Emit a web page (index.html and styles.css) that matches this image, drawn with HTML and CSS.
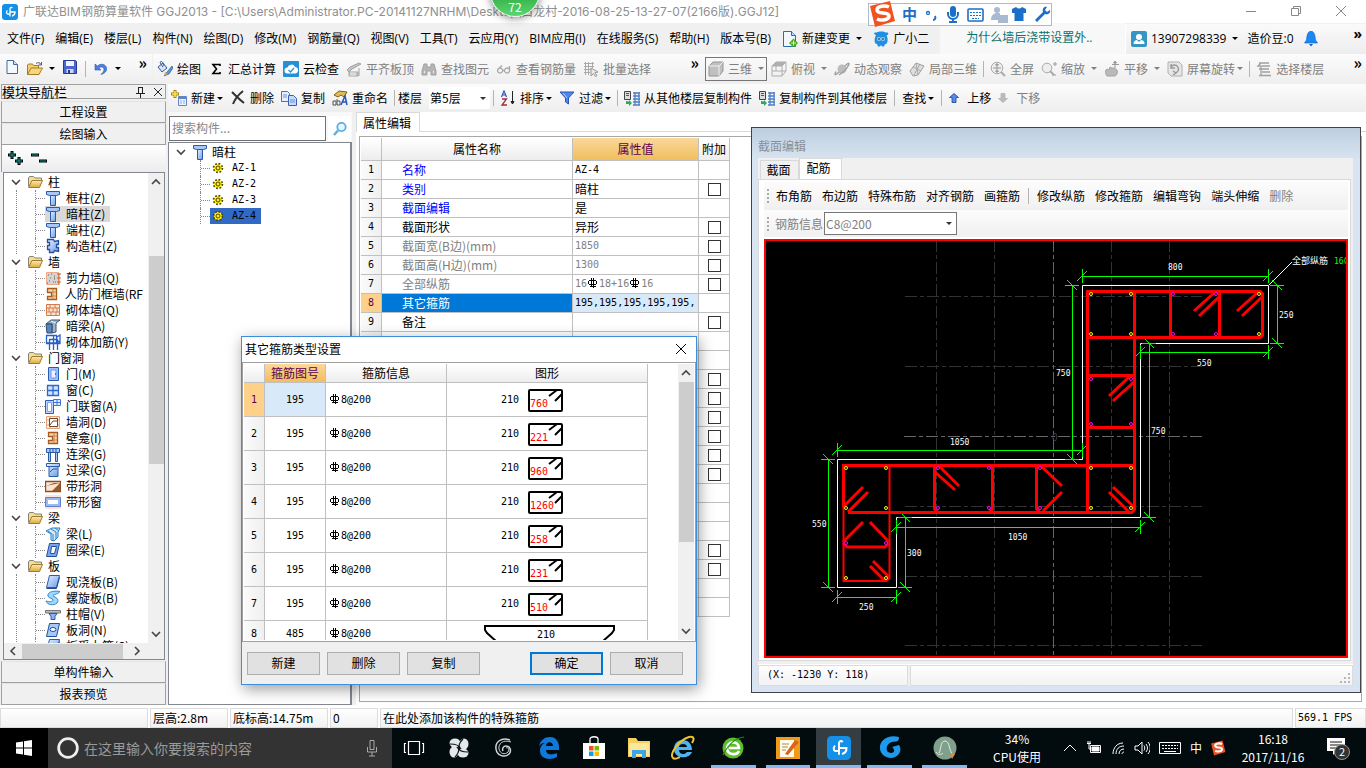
FILE: index.html
```html
<!DOCTYPE html>
<html lang="zh-CN">
<head>
    <meta charset="UTF-8">
    <meta name="viewport" content="width=device-width, initial-scale=1.0">
    <title>广联达BIM钢筋算量软件 GGJ2013</title>
    <link rel="stylesheet" href="styles.css">
</head>
<body>
    <!-- icon sprite -->
    <svg class="sprite" aria-hidden="true">
        <defs>
            <linearGradient id="g-blue" x1="0" y1="0" x2="1" y2="1"><stop offset="0" stop-color="#e8f2ff"/><stop offset="1" stop-color="#6a9be8"/></linearGradient>
            <linearGradient id="g-gold" x1="0" y1="0" x2="0" y2="1"><stop offset="0" stop-color="#fdeeb0"/><stop offset="1" stop-color="#e0a636"/></linearGradient>
        </defs>
        <symbol id="app" viewBox="0 0 16 16"><rect width="16" height="16" rx="3" fill="#1590e8"/><path d="M10.500 4C9 2.500 8 4 8 5v7.500M5.500 6.500A2 2 0 0 0 5.500 10H8M8 8h5a4 4 0 0 1-3 4" fill="none" stroke="#fff" stroke-width="1.300"/></symbol>
        <symbol id="file" viewBox="0 0 16 16"><path d="M3 1.500h6.500l4 4v9H3z" fill="#f4f9ff" stroke="#44689c"/><path d="M9.500 1.500v4h4" fill="#cfe0f5" stroke="#44689c"/></symbol>
        <symbol id="open" viewBox="0 0 16 16"><path d="M.5 13.500V4l1-1h4l1 1.500h5V7" fill="#f3cf6e" stroke="#a87a28"/><path d="M.5 13.500 4 7h11.500l-3.500 6.500z" fill="#f7d77c" stroke="#a87a28"/><path d="M9 2.500c2-1.500 4-1 5 1M14.500 1v3h-3" fill="none" stroke="#557"/></symbol>
        <symbol id="save" viewBox="0 0 16 16"><path d="M1.500 1.500h12l1 1v12h-13z" fill="#4a68cf" stroke="#283a98"/><path d="M4 2h8v5H4z" fill="#eef4ff"/><path d="M4.500 10h7v4h-7z" fill="#cfd8f0"/><path d="M6 11h2v3H6z" fill="#283a98"/></symbol>
        <symbol id="undo" viewBox="0 0 16 16"><path d="M2 3v6h6L6 7c2-2 5-1 5 1.500S9 12 8 13.500c4-1 6-3.500 5.500-6.500C13 3 7.500 2 4.500 5z" fill="#4a7fe0" stroke="#2a58b4" stroke-width=".6"/></symbol>
        <symbol id="paint" viewBox="0 0 16 16"><path d="m1 6 5-4 4 5-5 4z" fill="#d6e4f6" stroke="#345a94"/><path d="M6 6C4 3 2 1 4 .5S6 3 7 5" fill="none" stroke="#345a94"/><path d="m15 5-5 6-3 4 5-2 4-6z" fill="#5a94dc" stroke="#345a94" stroke-width=".7"/><path d="m7 15 1-4 3 2z" fill="#d8a83a"/></symbol>
        <symbol id="sigma" viewBox="0 0 16 16"><path d="M12 5V3.500H5L8.500 8 5 12.500h7V11" fill="none" stroke="#000" stroke-width="1.600"/></symbol>
        <symbol id="cloud" viewBox="0 0 16 16"><rect width="16" height="16" rx="1" fill="#2591d2"/><path d="M4.500 12.500a3 3 0 0 1 0-6 4 4 0 0 1 7.500-.5 3.300 3.300 0 0 1 .5 6.500z" fill="#fff"/><path d="m5.500 9 2 2 3.500-4" fill="none" stroke="#2591d2" stroke-width="1.300"/></symbol>
        <symbol id="align" viewBox="0 0 16 16"><path d="m1 9 3-3 9-4 2 1-9 5-3 3zM3 11h9v4H3zM13 7v8" fill="#c4c4c4" stroke="#a2a2a2"/><path d="M5 11v4m2-4v4m2-4v4" stroke="#eee"/></symbol>
        <symbol id="binoc" viewBox="0 0 16 16"><path d="M3 3h3v3h4V3h3l2 7v4h-5v-4H6v4H1v-4z" fill="#b5b5b5" stroke="#a2a2a2"/><path d="M3 11h1m8 0h1" stroke="#eee" stroke-width="2"/></symbol>
        <symbol id="glasses" viewBox="0 0 16 16"><path d="M4 12a2.500 2.500 0 1 1 .1 0M11 12a2.500 2.500 0 1 1 .1 0M6.500 9.500h2M1.500 9 6 4.500M13.500 10V5" fill="none" stroke="#a8a8a8" stroke-width="1.300"/></symbol>
        <symbol id="batch" viewBox="0 0 16 16"><path d="M1 2.500h10M1 5.500h10M1 8.500h7M1 11.500h6M2.500 1v13M5.500 1v13M9.500 1v6" stroke="#aaa" fill="none"/><path d="m8 7 7 4-3 .7 2 3-1.500 1-2-3L8 15z" fill="#e8e8e8" stroke="#999"/></symbol>
        <symbol id="cube" viewBox="0 0 16 16"><path d="m1 5 4-4h10v9l-4 5H1z" fill="#c0c0c0" stroke="#949494"/><path d="M1 5h10v10M11 5l4-4" fill="none" stroke="#f0f0f0"/></symbol>
        <symbol id="topview" viewBox="0 0 16 16"><path d="m1 5 4-4h10l-4 4z" fill="#b0b0b0"/><path d="m1 5 4-4h10v9l-4 5H1zM1 5h10v10M11 5l4-4M5 1v9H1m4 0h10" fill="none" stroke="#adadad"/></symbol>
        <symbol id="orbit" viewBox="0 0 16 16"><circle cx="8" cy="8" r="4.500" fill="#bdbdbd"/><path d="M5 11C1 15 0 14 2 10.500M11 5c4-4 5-3 3 0-2 4-6 7-9 9" fill="none" stroke="#a0a0a0" stroke-width="1.500"/></symbol>
        <symbol id="local3d" viewBox="0 0 16 16"><path d="m1 10 6-8 8 3-6 9-5 1z" fill="#dedede" stroke="#a0a0a0"/><path d="m4 6 8 4M7 2l2 12M11 3 5 14" stroke="#aaa" fill="none"/></symbol>
        <symbol id="full" viewBox="0 0 16 16"><circle cx="7" cy="7" r="5.800" fill="#eee" stroke="#aaa"/><path d="M7 3v8M3 7h8M7 2.500 5.500 4h3zM7 11.500 5.500 10h3z" stroke="#999" fill="#999"/><path d="m11 11 4 4" stroke="#aaa" stroke-width="2"/></symbol>
        <symbol id="zoom" viewBox="0 0 16 16"><circle cx="6" cy="7" r="4.800" fill="#eee" stroke="#aaa"/><path d="M12 3h4m-2-2v4m-3 9h4" stroke="#999"/><path d="m9 10 4 4" stroke="#aaa" stroke-width="2"/></symbol>
        <symbol id="pan" viewBox="0 0 16 16"><path d="M3 15C1 12 1 9 3 8l2 1 1-3 2 1 2 0 3 2c1 3 0 5-2 6z" fill="#b9b9b9" stroke="#a4a4a4"/><path d="M11 0v7M8 3.500h7M11 0 9.500 2h3z" stroke="#999" fill="#999"/></symbol>
        <symbol id="rotate" viewBox="0 0 16 16"><path d="M1 1h11l3 3v11H4l-3-3z" fill="#e6e6e6" stroke="#b0b0b0"/><path d="M4 6a4 4 0 1 1 4 6M4 3v4h4M6 14l3-2-3-2" fill="none" stroke="#999" stroke-width="1.400"/></symbol>
        <symbol id="floors" viewBox="0 0 16 16"><path d="M3 2h10M6 5h8M3 8h10M6 11h8M3 14.500h12M5 2 2 5h3v10" fill="none" stroke="#a0a0a0" stroke-width="1.300"/></symbol>
        <symbol id="add" viewBox="0 0 16 16"><path d="M4 0v8M0 4h8" stroke="#a8830a" stroke-width="3"/><path d="M4 1v6M1 4h6" stroke="#ffe34a" stroke-width="1.600"/><path d="M7.500 6.500h8v9h-8z" fill="#eef4ff" stroke="#6386bd"/><path d="M8 7h7v2H8z" fill="#5b86cf"/><path d="M9 11h2m1 0h2m-5 2h2m1 0h2" stroke="#88a8dc"/></symbol>
        <symbol id="cross" viewBox="0 0 16 16"><path d="M2 2c4 4 8 8 12 11M13 1C8 5 5 9 3 14" fill="none" stroke="#333" stroke-width="2"/></symbol>
        <symbol id="copy" viewBox="0 0 16 16"><path d="M.5 1.500h6l2 2v8h-8z" fill="#e6efff" stroke="#4a70b8"/><path d="M7.500 5.500h5l3 3v7h-8z" fill="#c7dafa" stroke="#3961b0"/><path d="M2 5h4M2 7h4M9 10h5m-5 2h5" stroke="#6a92d8"/></symbol>
        <symbol id="rename" viewBox="0 0 16 16"><path d="m2 5 5-4 8 1-3 5-3-2-3 2z" fill="#e1bd5a" stroke="#80601a"/><path d="M1 11h3v4H1zM5 9v6h3v-4H5" fill="none" stroke="#555"/><path d="m9 15 4-9 2 9M10 12h5" fill="none" stroke="#2558b8" stroke-width="1.500"/></symbol>
        <symbol id="sort" viewBox="0 0 16 16"><path d="m1.500 7 2.500-6 2.500 6M2.500 5h3" fill="none" stroke="#3158b0" stroke-width="1.200"/><path d="M2 9h4.500L2 15h5" fill="none" stroke="#a22b3b" stroke-width="1.300"/><path d="M12.500 1v12M11 11.500l1.500 2.500 1.500-2.500z" stroke="#222" fill="#222"/></symbol>
        <symbol id="funnel" viewBox="0 0 16 16"><path d="M1 2h14l-5.500 6v6l-3-2V8z" fill="#4f86ee" stroke="#2a55b2"/><path d="m4 3 4 5" stroke="#b9d2ff"/></symbol>
        <symbol id="floorcopy" viewBox="0 0 16 16"><path d="M.5 1.500h6v8h-6z" fill="#ddd" stroke="#444"/><path d="M2 3.500h3m-3 2h3" stroke="#555"/><path d="M11 2v13M15 2v13M9 3h7M9 6h7M9 9h7M9 12h7M9 15h7" stroke="#4e7fc4" stroke-width="1.300"/><path d="M2 11v3h3v2l3-3-3-3v1.500z" fill="#2fa85a"/></symbol>
        <symbol id="up" viewBox="0 0 10 10"><path d="m5 .5 4.500 4H7v5H3v-5H.5z" fill="#5a8ae8" stroke="#1d3fa0" stroke-width=".8"/></symbol>
        <symbol id="down" viewBox="0 0 10 10"><path d="m5 9.500 4.500-4H7v-5H3v5H.5z" fill="#bbb" stroke="#b2b2b2" stroke-width=".8"/></symbol>
        <symbol id="change" viewBox="0 0 16 16"><path d="M1.500.5h8l4 4v11h-12z" fill="#f0f7ff" stroke="#2d6aa8"/><path d="M9.500.5v4h4" fill="#bcd8f4" stroke="#2d6aa8"/><path d="M11.500 7.500 16 12l-4.500 4.500L7 12z" fill="#48a91f"/><path d="M9 12h5m-2.500-2.500v5" stroke="#d9ff9c"/></symbol>
        <symbol id="mascot" viewBox="0 0 16 16"><path d="M3 4c-3-1-2-3 0-2.500C6 0 11 0 13 1.500c3-.5 3 2 .5 3C16 9 14 14 12 13l-1 2.500H9L8 14l-1 1.500H5L4 13C1 13 1 8 3 4z" fill="#1f8fe4"/><path d="M4.500 6.500h3v3h-3zM8.500 6.500h3v3h-3z" fill="#eaf6ff"/><path d="M6 7v2m4-2v2" stroke="#134" stroke-width="1.300"/></symbol>
        <symbol id="user" viewBox="0 0 16 16"><rect width="16" height="16" rx="2" fill="#3596c6"/><circle cx="8" cy="6" r="3" fill="#fff"/><path d="M2.500 13c0-3 2-4 3.500-4l2 2 2-2c2 0 3.500 1 3.500 4z" fill="#fff"/></symbol>
        <symbol id="bell" viewBox="0 0 16 16"><path d="M8 0C4 1 4 5 3.500 9L1.500 12h13l-2-3C12 5 12 1 8 0z" fill="#1c86f2" stroke="#0c62c4" stroke-width=".6"/><path d="M6 13h4l-2 2.500z" fill="#0c62c4"/></symbol>
        <symbol id="search" viewBox="0 0 16 16"><circle cx="9.500" cy="6" r="4.200" fill="#eaf6ff" stroke="#5aaee6" stroke-width="1.800"/><path d="m6 9.500-4 4.500" stroke="#5aaee6" stroke-width="2.500"/></symbol>
        <symbol id="rebar" viewBox="0 0 10 10"><path d="M1 2.500h7M.5 3v3M8.500 3v3M1 6.500h7M3.500 0v9M5.500 0v10M2 8.500h6" fill="none" stroke="currentColor"/></symbol>
        <!-- component tree -->
        <symbol id="folder" viewBox="0 0 16 16"><path d="M1.500 12V4l1-1.500h4L8 4h6.500v3" fill="#f7dd94" stroke="#8a8570"/><path d="M1.500 13.500 5 6.500h10.500l-3 7z" fill="url(#g-gold)" stroke="#9a7a36"/></symbol>
        <symbol id="column" viewBox="0 0 16 16"><path d="M1.500 1.500h13v3l-3 1h-7l-3-1z" fill="#a9c8f6" stroke="#2858a8"/><path d="M5.500 5.500h5v10h-5z" fill="url(#g-blue)" stroke="#2858a8"/></symbol>
        <symbol id="tiecol" viewBox="0 0 16 16"><path d="M4.500 1.500h4l1 2 4-1v4h-2v3h2v4l-4-1-1 2h-4v-3h-2v-4h2v-3h-2v-3z" fill="url(#g-blue)" stroke="#234f9c" stroke-width="1.300"/></symbol>
        <symbol id="shear" viewBox="0 0 16 16"><path d="M1.500 2.500h12v12h-12z" fill="#d4d4d4" stroke="#f0a888"/><path d="M3 5h1m2-1h1m2 2h1m-5 2h1m3 1h1m-6 2h1m3 1h1m-7 1h1m6-5h1m0 4h1" stroke="#666"/><path d="M14 3v12M12 4h4m-4 4h4m-4 4h4" stroke="#c66a2c"/></symbol>
        <symbol id="niche" viewBox="0 0 16 16"><path d="M3.500 2.500h9v11h-9v-3h4v-4h-4z" fill="#f6d3a8" stroke="#a85a1c" stroke-width="1.300"/><path d="M8 6h4M8 10h4M9 3v10" stroke="#c98550"/></symbol>
        <symbol id="brick" viewBox="0 0 16 16"><path d="M1.500 2.500h13v11h-13z" fill="#fde5d4" stroke="#d27a4c"/><path d="M1 6h14M1 10h14M5 2v4m5-4v4M8 6v4m4-4v4M4 6v4m2 0v4m5-4v4" stroke="#d27a4c"/></symbol>
        <symbol id="hidbeam" viewBox="0 0 16 16"><path d="m1 6 5-4h9l-4 3v9l-4 1V6z" fill="#9fb4cc" stroke="#3c5470"/><path d="M1 6h6v9H2z" fill="#5c86b8" stroke="#2d4a70"/><path d="m6 3 5 2" stroke="#e4eefa"/></symbol>
        <symbol id="ties" viewBox="0 0 16 16"><path d="M1.500 9V1.500h10V9zM4.500 16V5.500h8V16M1 9.500h14M8.500 2v14M12 3l3-2v8l-3-3" fill="none" stroke="#2460cc" stroke-width="1.300"/></symbol>
        <symbol id="door" viewBox="0 0 16 16"><path d="M3.500 1.500h10v13h-10z" fill="#9dc0fa" stroke="#2a5bb4"/><path d="M6 4h5v8H6z" fill="#eaf3ff" stroke="#6b9af0"/><path d="M10 8h1" stroke="#113"/></symbol>
        <symbol id="window" viewBox="0 0 16 16"><path d="M2.500 3.500h11v10h-11zM8 3v11M3 8.500h10" fill="#d0e6ff" stroke="#2f66cc" stroke-width="1.300"/></symbol>
        <symbol id="doorwin" viewBox="0 0 16 16"><path d="M.5 2.500h8v13h-8z" fill="#bcd5ff" stroke="#2f5cc0"/><path d="M2.500 4.500h4v9h-4z" fill="#fff" stroke="#7ba2ec"/><path d="M8.500 1.500h7v6h-7zM12 1v7M8 4.500h8" fill="#e2eeff" stroke="#3f72dc"/></symbol>
        <symbol id="hole" viewBox="0 0 16 16"><path d="M1.500 2.500h13v12h-13zM1 6h14M1 11h14M5 2v12m7-12v12" fill="#fff0e2" stroke="#dfa37c"/><path d="M4.500 4.500h8v8h-8z" fill="#fff" stroke="#70462a"/><path d="m5 11 3-4h4" stroke="#70462a" fill="none"/></symbol>
        <symbol id="linkbeam" viewBox="0 0 16 16"><path d="M1.500 2.500h13v4h-13zM3.500 6.500h2v9h-2zM10.500 6.500h2v9h-2z" fill="#aac8f8" stroke="#285ba8"/><path d="M5 3v3m3-3v3m3-3v3" stroke="#285ba8"/></symbol>
        <symbol id="lintel" viewBox="0 0 16 16"><path d="M1.500 1.500h13v3h-13zM4 4.500h9v10H4z" fill="url(#g-blue)" stroke="#285ba8"/><path d="m5 10 3-3h4" stroke="#285ba8" fill="none"/></symbol>
        <symbol id="striphole" viewBox="0 0 16 16"><path d="M.5 3.500h15v10H.5z" fill="#fce6d2" stroke="#8f4d1c" stroke-width="1.400"/><path d="m1 8 8-3h6v8H7l8-8z" fill="#9a5a28"/></symbol>
        <symbol id="stripwin" viewBox="0 0 16 16"><path d="M0 1h16v14H0z" fill="#fde3da"/><path d="M.5 3.500h15v9H.5z" fill="#9bbaf4" stroke="#5e7fce"/><path d="M3 6h10v4H3z" fill="#fff"/></symbol>
        <symbol id="beam" viewBox="0 0 16 16"><path d="m1 5 6-3h8l-2 4v5l-4 4-3-1V8z" fill="#cfe8fb" stroke="#2b80c4"/><path d="m3 5 4 3m-1-5 5 3m-1-4 4 3M8 8v7m3-9v7" stroke="#2b80c4"/></symbol>
        <symbol id="ringbeam" viewBox="0 0 16 16"><path d="M4.500 1.500h10l-3 13h-10z" fill="#7ba7ea" stroke="#204f9e"/><path d="M6.500 4.500h5l-2 7h-4z" fill="#fff" stroke="#204f9e"/></symbol>
        <symbol id="slab" viewBox="0 0 16 16"><path d="M4.500 1.500h10l-3 12h-10z" fill="url(#g-blue)" stroke="#2a5bb0"/><path d="M1.500 14.500h10l3-11" fill="none" stroke="#234a90"/></symbol>
        <symbol id="spiral" viewBox="0 0 16 16"><path d="M15 1.500C7 0 2 3 3 6s5 2 5 4-4 2-7 1c1 4 8 5 11 2 3-4-2-6-4-7 0-2 4-1 7-4.500z" fill="#9fd8fa" stroke="#2f86cc"/></symbol>
        <symbol id="cap" viewBox="0 0 16 16"><path d="M.5 4.500h15v2.500H.5z" fill="#bbb" stroke="#777"/><path d="M4 7.500h8l-2 3v3H6v-3z" fill="#8ab2f4" stroke="#2a5bb0"/></symbol>
        <symbol id="slabhole" viewBox="0 0 16 16"><path d="M4.500 1.500h10l-3 13h-10z" fill="#a6c8f8" stroke="#204f9e"/><ellipse cx="8" cy="7.500" rx="3" ry="2" fill="#fff" stroke="#204f9e"/></symbol>
        <symbol id="gear" viewBox="0 0 12 12"><circle cx="6" cy="6" r="4" fill="#ffef1a" stroke="#4a4400" stroke-width="2.500" stroke-dasharray="1.600 1.540"/><circle cx="6" cy="6" r="3.600" fill="#ffef1a"/><circle cx="6" cy="6" r="2" fill="none" stroke="#4a4400"/></symbol>
        <symbol id="chev" viewBox="0 0 10 10"><path d="m1 3 4 4 4-4" fill="none" stroke="#444" stroke-width="1.600"/></symbol>
        <symbol id="sogou" viewBox="0 0 28 28"><path d="m2 6 20-5 5 20-20 6z" fill="#f0531f"/><path d="M21 7c-4-2-12-1-12 3 0 5 12 1 12 6 0 4-8 5-12 3" fill="none" stroke="#fff" stroke-width="3.600"/></symbol>
        <!-- stirrup rectangle with its two hooks -->
        <symbol id="hooks" viewBox="0 0 36 24"><rect x="1" y="2" width="33" height="21" rx="1" fill="none" stroke="#000" stroke-width="2"/><path d="m21 8 8-6M27 13l7-7" stroke="#000" stroke-width="2"/></symbol>
        <!-- dimension ends -->
        <symbol id="dim-h" viewBox="-8 -8 16 16"><path d="M.5-7v14M-5 5 5-5" stroke="#0f0" fill="none"/></symbol>
        <symbol id="dim-v" viewBox="-8 -8 16 16"><path d="M-7 .5H7M-5-5 5 5" stroke="#0f0" fill="none"/></symbol>
        <symbol id="size-grip" viewBox="0 0 12 12"><path d="M8 1h2v2H8zM4 5h2v2H4zM8 5h2v2H8zM0 9h2v2H0zM4 9h2v2H4zM8 9h2v2H8z" fill="#b8b8b8"/></symbol>
    </svg>

    <header class="titlebar">
        <svg class="icon"><use href="#app"/></svg>
        <span class="title">广联达BIM钢筋算量软件 GGJ2013 - [C:\Users\Administrator.PC-20141127NRHM\Desktop\白龙村-2016-08-25-13-27-07(2166版).GGJ12]</span>
        <div class="win-buttons">
            <button aria-label="最小化"><svg viewBox="0 0 12 12"><path d="M1 6.500h10"/></svg></button>
            <button aria-label="还原"><svg viewBox="0 0 12 12"><path d="M1.500 3.500h7v7h-7zM3.500 3V1.500h7v7H9"/></svg></button>
            <button aria-label="关闭"><svg viewBox="0 0 12 12"><path d="m1 1 10 10M11 1 1 11"/></svg></button>
        </div>
    </header>

    <nav class="menubar">
        <button>文件(F)</button><button>编辑(E)</button><button>楼层(L)</button><button>构件(N)</button><button>绘图(D)</button><button>修改(M)</button><button>钢筋量(Q)</button><button>视图(V)</button><button>工具(T)</button><button>云应用(Y)</button><button>BIM应用(I)</button><button>在线服务(S)</button><button>帮助(H)</button><button>版本号(B)</button>
        <button class="tool"><svg class="icon"><use href="#change"/></svg>新建变更<i class="caret"></i></button>
        <button class="tool"><svg class="icon"><use href="#mascot"/></svg>广小二</button>
        <a class="tip" href="#">为什么墙后浇带设置外..</a>
        <div class="account">
            <button class="tool"><svg class="icon"><use href="#user"/></svg>13907298339<i class="caret"></i></button>
            <span>造价豆:0</span>
            <svg class="icon"><use href="#bell"/></svg>
            <b class="more">»</b>
        </div>
    </nav>

    <div class="toolbars">
        <div class="toolbar files">
            <button aria-label="新建"><svg class="icon"><use href="#file"/></svg></button>
            <button class="tool" aria-label="打开"><svg class="icon"><use href="#open"/></svg><i class="caret"></i></button>
            <button aria-label="保存"><svg class="icon"><use href="#save"/></svg></button>
            <i class="sep"></i>
            <button class="tool" aria-label="撤销"><svg class="icon"><use href="#undo"/></svg><i class="caret"></i></button>
            <b class="more">»</b>
        </div>
        <div class="toolbar actions">
            <button class="tool"><svg class="icon"><use href="#paint"/></svg>绘图</button>
            <button class="tool"><svg class="icon"><use href="#sigma"/></svg>汇总计算</button>
            <button class="tool"><svg class="icon"><use href="#cloud"/></svg>云检查</button>
            <button class="tool off"><svg class="icon"><use href="#align"/></svg>平齐板顶</button>
            <button class="tool off"><svg class="icon"><use href="#binoc"/></svg>查找图元</button>
            <button class="tool off"><svg class="icon"><use href="#glasses"/></svg>查看钢筋量</button>
            <button class="tool off"><svg class="icon"><use href="#batch"/></svg>批量选择</button>
            <b class="more">»</b>
        </div>
        <div class="toolbar views">
            <button class="tool off boxed"><svg class="icon"><use href="#cube"/></svg>三维<i class="caret"></i></button>
            <button class="tool off"><svg class="icon"><use href="#topview"/></svg>俯视<i class="caret"></i></button>
            <button class="tool off"><svg class="icon"><use href="#orbit"/></svg>动态观察</button>
            <button class="tool off"><svg class="icon"><use href="#local3d"/></svg>局部三维</button>
            <i class="sep"></i>
            <button class="tool off"><svg class="icon"><use href="#full"/></svg>全屏</button>
            <button class="tool off"><svg class="icon"><use href="#zoom"/></svg>缩放<i class="caret"></i></button>
            <button class="tool off"><svg class="icon"><use href="#pan"/></svg>平移<i class="caret"></i></button>
            <button class="tool off tight"><svg class="icon"><use href="#rotate"/></svg>屏幕旋转<i class="caret"></i></button>
            <i class="sep"></i>
            <button class="tool off"><svg class="icon"><use href="#floors"/></svg>选择楼层</button>
            <b class="more">»</b>
        </div>
    </div>

    <main class="workspace">
        <aside class="nav-panel">
            <div class="nav-title">模块导航栏
                <svg viewBox="0 0 30 12"><path d="M5 1.500h5M5.500 1v6M9.500 1v6M3 7.500h9M7.500 8v4M21 2l8 8M29 2l-8 8"/></svg>
            </div>
            <button class="nav-button">工程设置</button>
            <button class="nav-button">绘图输入</button>
            <div class="nav-tools">
                <svg viewBox="0 0 40 18"><path d="M5 1v8M1 5h8M12 7v8M8 11h8M24 5h8M32 11h8" stroke="#000" stroke-width="3"/><path d="M5 2v6M2 5h6M12 8v6M9 11h6M25 5h6M33 11h6" stroke="#00a0a0" stroke-width="1"/></svg>
            </div>
            <div class="tree-box">
                <div class="tree-main">
                    <ul class="tree">
                        <li><div class="branch"><svg class="chev"><use href="#chev"/></svg><svg class="icon"><use href="#folder"/></svg>柱</div>
                            <ul>
                                <li><span class="leaf"><svg class="icon"><use href="#column"/></svg>框柱(Z)</span></li>
                                <li><span class="leaf current"><svg class="icon"><use href="#column"/></svg>暗柱(Z)</span></li>
                                <li><span class="leaf"><svg class="icon"><use href="#column"/></svg>端柱(Z)</span></li>
                                <li><span class="leaf"><svg class="icon"><use href="#tiecol"/></svg>构造柱(Z)</span></li>
                            </ul>
                        </li>
                        <li><div class="branch"><svg class="chev"><use href="#chev"/></svg><svg class="icon"><use href="#folder"/></svg>墙</div>
                            <ul>
                                <li><span class="leaf"><svg class="icon"><use href="#shear"/></svg>剪力墙(Q)</span></li>
                                <li><span class="leaf"><svg class="icon"><use href="#niche"/></svg>人防门框墙(RF</span></li>
                                <li><span class="leaf"><svg class="icon"><use href="#brick"/></svg>砌体墙(Q)</span></li>
                                <li><span class="leaf"><svg class="icon"><use href="#hidbeam"/></svg>暗梁(A)</span></li>
                                <li><span class="leaf"><svg class="icon"><use href="#ties"/></svg>砌体加筋(Y)</span></li>
                            </ul>
                        </li>
                        <li><div class="branch"><svg class="chev"><use href="#chev"/></svg><svg class="icon"><use href="#folder"/></svg>门窗洞</div>
                            <ul>
                                <li><span class="leaf"><svg class="icon"><use href="#door"/></svg>门(M)</span></li>
                                <li><span class="leaf"><svg class="icon"><use href="#window"/></svg>窗(C)</span></li>
                                <li><span class="leaf"><svg class="icon"><use href="#doorwin"/></svg>门联窗(A)</span></li>
                                <li><span class="leaf"><svg class="icon"><use href="#hole"/></svg>墙洞(D)</span></li>
                                <li><span class="leaf"><svg class="icon"><use href="#niche"/></svg>壁龛(I)</span></li>
                                <li><span class="leaf"><svg class="icon"><use href="#linkbeam"/></svg>连梁(G)</span></li>
                                <li><span class="leaf"><svg class="icon"><use href="#lintel"/></svg>过梁(G)</span></li>
                                <li><span class="leaf"><svg class="icon"><use href="#striphole"/></svg>带形洞</span></li>
                                <li><span class="leaf"><svg class="icon"><use href="#stripwin"/></svg>带形窗</span></li>
                            </ul>
                        </li>
                        <li><div class="branch"><svg class="chev"><use href="#chev"/></svg><svg class="icon"><use href="#folder"/></svg>梁</div>
                            <ul>
                                <li><span class="leaf"><svg class="icon"><use href="#beam"/></svg>梁(L)</span></li>
                                <li><span class="leaf"><svg class="icon"><use href="#ringbeam"/></svg>圈梁(E)</span></li>
                            </ul>
                        </li>
                        <li><div class="branch"><svg class="chev"><use href="#chev"/></svg><svg class="icon"><use href="#folder"/></svg>板</div>
                            <ul>
                                <li><span class="leaf"><svg class="icon"><use href="#slab"/></svg>现浇板(B)</span></li>
                                <li><span class="leaf"><svg class="icon"><use href="#spiral"/></svg>螺旋板(B)</span></li>
                                <li><span class="leaf"><svg class="icon"><use href="#cap"/></svg>柱帽(V)</span></li>
                                <li><span class="leaf"><svg class="icon"><use href="#slabhole"/></svg>板洞(N)</span></li>
                                <li><span class="leaf"><svg class="icon"><use href="#slab"/></svg>板受力筋(S)</span></li>
                            </ul>
                        </li>
                    </ul>
                    <div class="vscroll nav-scroll"><svg class="chev"><use href="#chev"/></svg><i></i><svg class="chev"><use href="#chev"/></svg></div>
                </div>
                <div class="hscroll"><svg class="chev"><use href="#chev"/></svg><i></i><svg class="chev"><use href="#chev"/></svg></div>
            </div>
            <button class="nav-button">单构件输入</button>
            <button class="nav-button">报表预览</button>
        </aside>

        <section class="content">
            <div class="toolbar edit-bar">
                <button class="tool tight"><svg class="icon"><use href="#add"/></svg>新建<i class="caret"></i></button>
                <button class="tool"><svg class="icon"><use href="#cross"/></svg>删除</button>
                <button class="tool"><svg class="icon"><use href="#copy"/></svg>复制</button>
                <button class="tool"><svg class="icon"><use href="#rename"/></svg>重命名</button>
                <i class="sep"></i>
                <label class="floor">楼层
                    <select><option>第5层</option></select>
                </label>
                <i class="sep"></i>
                <button class="tool tight"><svg class="icon"><use href="#sort"/></svg>排序<i class="caret"></i></button>
                <button class="tool tight"><svg class="icon"><use href="#funnel"/></svg>过滤<i class="caret"></i></button>
                <i class="sep"></i>
                <button class="tool"><svg class="icon"><use href="#floorcopy"/></svg>从其他楼层复制构件</button>
                <button class="tool"><svg class="icon"><use href="#floorcopy"/></svg>复制构件到其他楼层</button>
                <i class="sep"></i>
                <button class="tool tight">查找<i class="caret"></i></button>
                <i class="sep"></i>
                <button class="tool move"><svg class="arrow"><use href="#up"/></svg>上移</button>
                <button class="tool move off"><svg class="arrow"><use href="#down"/></svg>下移</button>
            </div>

            <div class="panes">
                <div class="component-pane">
                    <div class="search">
                        <input type="text" placeholder="搜索构件..." aria-label="搜索构件">
                        <button aria-label="搜索"><svg class="icon"><use href="#search"/></svg></button>
                    </div>
                    <div class="component-list">
                        <div class="branch"><svg class="chev"><use href="#chev"/></svg><svg class="icon"><use href="#column"/></svg>暗柱</div>
                        <ul>
                            <li><span class="leaf"><svg class="gear"><use href="#gear"/></svg>AZ-1</span></li>
                            <li><span class="leaf"><svg class="gear"><use href="#gear"/></svg>AZ-2</span></li>
                            <li><span class="leaf"><svg class="gear"><use href="#gear"/></svg>AZ-3</span></li>
                            <li><span class="leaf picked"><svg class="gear"><use href="#gear"/></svg>AZ-4</span></li>
                        </ul>
                    </div>
                </div>

                <div class="property-pane">
                    <div class="tab-strip"><button class="tab">属性编辑</button></div>
                    <div class="property-box">
                        <table class="grid property">
                            <colgroup><col class="w-num"><col class="w-name"><col class="w-value"><col class="w-extra"></colgroup>
                            <thead><tr><th></th><th>属性名称</th><th class="hot">属性值</th><th>附加</th></tr></thead>
                            <tbody>
                                <tr><th>1</th><td class="link">名称</td><td class="code">AZ-4</td><td></td></tr>
                                <tr><th>2</th><td class="link">类别</td><td>暗柱</td><td><input type="checkbox" aria-label="附加"></td></tr>
                                <tr><th>3</th><td class="link">截面编辑</td><td>是</td><td></td></tr>
                                <tr><th>4</th><td>截面形状</td><td>异形</td><td><input type="checkbox" aria-label="附加"></td></tr>
                                <tr class="dim"><th>5</th><td>截面宽(B边)(mm)</td><td class="code">1850</td><td><input type="checkbox" aria-label="附加"></td></tr>
                                <tr class="dim"><th>6</th><td>截面高(H边)(mm)</td><td class="code">1300</td><td><input type="checkbox" aria-label="附加"></td></tr>
                                <tr class="dim"><th>7</th><td>全部纵筋</td><td class="code">16<svg class="rebar"><use href="#rebar"/></svg>18+16<svg class="rebar"><use href="#rebar"/></svg>16</td><td><input type="checkbox" aria-label="附加"></td></tr>
                                <tr class="active"><th>8</th><td>其它箍筋</td><td class="code">195,195,195,195,195,</td><td></td></tr>
                                <tr><th>9</th><td>备注</td><td></td><td><input type="checkbox" aria-label="附加"></td></tr>
                                <tr><th></th><td></td><td></td><td></td></tr>
                                <tr><th></th><td></td><td></td><td></td></tr>
                                <tr><th></th><td></td><td></td><td><input type="checkbox" aria-label="附加"></td></tr>
                                <tr><th></th><td></td><td></td><td><input type="checkbox" aria-label="附加"></td></tr>
                                <tr><th></th><td></td><td></td><td><input type="checkbox" aria-label="附加"></td></tr>
                                <tr><th></th><td></td><td></td><td><input type="checkbox" aria-label="附加"></td></tr>
                                <tr><th></th><td></td><td></td><td><input type="checkbox" aria-label="附加"></td></tr>
                                <tr><th></th><td></td><td></td><td><input type="checkbox" aria-label="附加"></td></tr>
                                <tr><th></th><td></td><td></td><td></td></tr>
                                <tr><th></th><td></td><td></td><td></td></tr>
                                <tr><th></th><td></td><td></td><td></td></tr>
                                <tr><th></th><td></td><td></td><td><input type="checkbox" aria-label="附加"></td></tr>
                                <tr><th></th><td></td><td></td><td><input type="checkbox" aria-label="附加"></td></tr>
                                <tr><th></th><td></td><td></td><td></td></tr>
                                <tr><th></th><td></td><td></td><td></td></tr>
                            </tbody>
                        </table>
                    </div>
                </div>
            </div>
        </section>
    </main>

    <footer class="statusbar">
        <span class="s-blank"></span><span class="s-height">层高:2.8m</span><span class="s-base">底标高:14.75m</span><span class="s-count">0</span><span class="s-hint">在此处添加该构件的特殊箍筋</span><span class="s-fps code">569.1 FPS</span>
    </footer>

    <!-- section editor window -->
    <section class="editor">
        <h2>截面编辑</h2>
        <div class="editor-body">
            <div class="editor-tabs"><button>截面</button><button class="on">配筋</button></div>
            <div class="editor-page">
                <div class="editor-bar">
                    <i class="grip"></i><button>布角筋</button><button>布边筋</button><button>特殊布筋</button><button>对齐钢筋</button><button>画箍筋</button><i class="sep"></i><button>修改纵筋</button><button>修改箍筋</button><button>编辑弯钩</button><button>端头伸缩</button><button class="off">删除</button>
                </div>
                <div class="editor-bar info">
                    <i class="grip"></i><label for="steel">钢筋信息</label><select id="steel"><option>C8@200</option></select>
                </div>
                <svg class="drawing" viewBox="766 241 580 415" preserveAspectRatio="xMinYMin slice">
                    <g class="axes">
                        <path d="M936.500 240v420M994.500 240v420M1111.500 240v420M1169.500 240v420M905 296.500h297M905 366.500h297M905 506.500h297M905 576.500h297M905 645.500h297"/>
                        <path class="main-axis" d="M1053.500 240v420M904 436.500h298"/>
                    </g>
                    <text class="origin" x="1052" y="441">0</text>
                    <path class="outline" d="M837.500 459.500h245v-174h186v58h-128v174h-244v70h-59z"/>
                    <path class="outline" d="m1269 285 23-23"/>
                    <g class="dims">
                        <path d="M1082 276.500h187M1072.500 285v175M1140 352.500h129M1277.500 285v59M1149.500 343v175M837 450.500h246M896 527.500h245M828.500 459v129M905.500 517v71M837 597.500h60"/>
                        <use href="#dim-h" x="1074" y="268" width="16" height="16"/><use href="#dim-h" x="1260" y="268" width="16" height="16"/>
                        <use href="#dim-h" x="1132" y="344" width="16" height="16"/><use href="#dim-h" x="1260" y="344" width="16" height="16"/>
                        <use href="#dim-h" x="829" y="442" width="16" height="16"/><use href="#dim-h" x="1074" y="442" width="16" height="16"/>
                        <use href="#dim-h" x="888" y="519" width="16" height="16"/><use href="#dim-h" x="1132" y="519" width="16" height="16"/>
                        <use href="#dim-h" x="829" y="589" width="16" height="16"/><use href="#dim-h" x="888" y="589" width="16" height="16"/>
                        <use href="#dim-v" x="1064" y="277" width="16" height="16"/><use href="#dim-v" x="1064" y="451" width="16" height="16"/>
                        <use href="#dim-v" x="1269" y="277" width="16" height="16"/><use href="#dim-v" x="1269" y="335" width="16" height="16"/>
                        <use href="#dim-v" x="1141" y="335" width="16" height="16"/><use href="#dim-v" x="1141" y="509" width="16" height="16"/>
                        <use href="#dim-v" x="820" y="451" width="16" height="16"/><use href="#dim-v" x="820" y="579" width="16" height="16"/>
                        <use href="#dim-v" x="897" y="509" width="16" height="16"/><use href="#dim-v" x="897" y="579" width="16" height="16"/>
                    </g>
                    <g class="stirrups">
                        <path d="M843.500 507V465.500h291M848 512.500h284l2.500-3V291.500M1087.500 512V291.500h173l2 2v42l-2 2h-173M934.500 466v43l3 3M992.500 466v43l-3 3M1036.500 466v43l3 3M1170.500 292v45M1219.500 292v45M1088 375.500h46M1088 427.500h46M843 543l4 4h38l4-4"/>
                        <path class="thin" d="M843.500 506v75h43l3-3V466"/>
                        <path d="m1214 293-20 18M1219 297l-20 19M1257 293l-20 18M1262 297l-20 19M1129 377l-20 19M1134 382l-21 19M1113 487l21 20M1109 492l20 20M1042 467l20 19M1062 492l-19 19M843 507l20-20M848 512l20-20M940 467l19 19M935 472l20 18M843 542l20-20M870 522l19 20M873 561l16 16M870 566l15 15"/>
                    </g>
                    <g class="bars corner">
                        <circle cx="846" cy="468" r="1.500"/><circle cx="886" cy="468" r="1.500"/><circle cx="846" cy="508" r="1.500"/><circle cx="886" cy="508" r="1.500"/><circle cx="846" cy="578" r="1.500"/><circle cx="886" cy="578" r="1.500"/>
                        <circle cx="1091" cy="294" r="1.500"/><circle cx="1131" cy="294" r="1.500"/><circle cx="1259" cy="294" r="1.500"/><circle cx="1091" cy="334" r="1.500"/><circle cx="1131" cy="334" r="1.500"/><circle cx="1259" cy="334" r="1.500"/>
                        <circle cx="1091" cy="468" r="1.500"/><circle cx="1131" cy="468" r="1.500"/><circle cx="1091" cy="508" r="1.500"/><circle cx="1131" cy="508" r="1.500"/>
                    </g>
                    <g class="bars edge">
                        <circle cx="846" cy="543" r="1.500"/><circle cx="886" cy="543" r="1.500"/><circle cx="938" cy="468" r="1.500"/><circle cx="989" cy="468" r="1.500"/><circle cx="1040" cy="468" r="1.500"/><circle cx="938" cy="508" r="1.500"/><circle cx="989" cy="508" r="1.500"/><circle cx="1040" cy="508" r="1.500"/>
                        <circle cx="1173" cy="294" r="1.500"/><circle cx="1216" cy="294" r="1.500"/><circle cx="1173" cy="334" r="1.500"/><circle cx="1216" cy="334" r="1.500"/><circle cx="1091" cy="379" r="1.500"/><circle cx="1131" cy="379" r="1.500"/><circle cx="1091" cy="424" r="1.500"/><circle cx="1131" cy="424" r="1.500"/>
                    </g>
                    <g class="labels">
                        <text x="1168" y="270">800</text><text x="1056" y="376">750</text><text x="1197" y="366">550</text><text x="1279" y="318">250</text><text x="1151" y="434">750</text>
                        <text x="950" y="445">1050</text><text x="1008" y="540">1050</text><text x="812" y="527">550</text><text x="907" y="556">300</text><text x="859" y="610">250</text>
                        <text class="note" x="1292" y="264">全部纵筋</text><text class="green" x="1334" y="264">16C18</text>
                    </g>
                </svg>
            </div>
            <div class="editor-status"><span>(X: -1230 Y: 118)</span><span><svg><use href="#size-grip"/></svg></span></div>
        </div>
    </section>

    <!-- stirrup type dialog -->
    <section class="dialog" role="dialog" aria-label="其它箍筋类型设置">
        <div class="dialog-title">其它箍筋类型设置<button aria-label="关闭"><svg viewBox="0 0 12 12"><path d="m1 1 10 10M11 1 1 11"/></svg></button></div>
        <div class="dialog-grid">
            <div class="dialog-view">
                <table class="grid stirrup">
                    <colgroup><col class="w-num"><col class="w-no"><col class="w-info"><col class="w-shape"></colgroup>
                    <thead><tr><th></th><th class="hot">箍筋图号</th><th>箍筋信息</th><th>图形</th></tr></thead>
                    <tbody>
                        <tr class="active"><th>1</th><td>195</td><td><svg class="rebar"><use href="#rebar"/></svg>8@200</td><td><div class="shape">210<svg><use href="#hooks"/><text x="2" y="19">760</text></svg></div></td></tr>
                        <tr><th>2</th><td>195</td><td><svg class="rebar"><use href="#rebar"/></svg>8@200</td><td><div class="shape">210<svg><use href="#hooks"/><text x="2" y="19">221</text></svg></div></td></tr>
                        <tr><th>3</th><td>195</td><td><svg class="rebar"><use href="#rebar"/></svg>8@200</td><td><div class="shape">210<svg><use href="#hooks"/><text x="2" y="19">960</text></svg></div></td></tr>
                        <tr><th>4</th><td>195</td><td><svg class="rebar"><use href="#rebar"/></svg>8@200</td><td><div class="shape">210<svg><use href="#hooks"/><text x="2" y="19">1260</text></svg></div></td></tr>
                        <tr><th>5</th><td>195</td><td><svg class="rebar"><use href="#rebar"/></svg>8@200</td><td><div class="shape">210<svg><use href="#hooks"/><text x="2" y="19">258</text></svg></div></td></tr>
                        <tr><th>6</th><td>195</td><td><svg class="rebar"><use href="#rebar"/></svg>8@200</td><td><div class="shape">210<svg><use href="#hooks"/><text x="2" y="19">231</text></svg></div></td></tr>
                        <tr><th>7</th><td>195</td><td><svg class="rebar"><use href="#rebar"/></svg>8@200</td><td><div class="shape">210<svg><use href="#hooks"/><text x="2" y="19">510</text></svg></div></td></tr>
                        <tr class="last"><th>8</th><td>485</td><td><svg class="rebar"><use href="#rebar"/></svg>8@200</td><td><svg class="cup" viewBox="0 0 134 20"><path d="m14 18-10-9-2-3V2h129v4l-2 3-10 9"/><text x="54" y="14">210</text></svg></td></tr>
                    </tbody>
                </table>
                <div class="vscroll"><svg class="chev"><use href="#chev"/></svg><i></i><svg class="chev"><use href="#chev"/></svg></div>
            </div>
        </div>
        <div class="dialog-buttons">
            <button>新建</button><button>删除</button><button>复制</button>
            <button class="ok">确定</button><button>取消</button>
        </div>
    </section>

    <div class="ball">72</div>

    <div class="ime">
        <svg viewBox="0 0 184 28">
            <use href="#sogou" x="0" y="0" width="28" height="28"/>
            <text x="34" y="20">中</text>
            <g fill="none" stroke="#1c6fc8" stroke-width="2"><circle cx="60" cy="13" r="1.500" stroke-width="1.300"/><path d="M67 16c1 2 0 4-2 4M80 12v2a5 5 0 0 0 10 0v-2M85 19v3M81 22h8"/></g>
            <rect x="82" y="6" width="6" height="11" rx="3" fill="#1c6fc8"/>
            <rect x="100" y="9" width="15" height="12" rx="1" fill="none" stroke="#1c6fc8" stroke-width="1.600"/><path d="M102 12.500h11M102 15.500h11M104 18.500h7" stroke="#1c6fc8" stroke-dasharray="2 1"/>
            <g fill="#a9b9cf"><circle cx="129" cy="10" r="3"/><path d="M123 20c0-5 3-7 6-7h3v7z"/><rect x="130" y="15" width="10" height="8"/></g>
            <path d="M144 9l4-2c2 2 4 2 6 0l4 2 0 4-2.500 0V21h-9v-8h-2.500z" fill="#1c6fc8"/>
            <path d="M167 20l8-8c-1-3 1-6 4-5l-2 3 2 2 3-2c1 3-2 5-5 4l-8 8z" fill="#1c6fc8"/>
        </svg>
    </div>

    <footer class="taskbar">
        <button class="start" aria-label="开始"><svg viewBox="0 0 16 16"><path d="M0 2.500 7 1.500v6H0zM8 1.300 16 0v7.500H8zM0 8.500h7v6L0 13.500zM8 8.500h8V16l-8-1.300z" fill="#fff"/></svg></button>
        <div class="cortana">
            <svg viewBox="0 0 20 20"><circle cx="10" cy="10" r="8.500" fill="none" stroke="#eee" stroke-width="2.500"/></svg>
            <input type="text" placeholder="在这里输入你要搜索的内容" aria-label="搜索">
            <svg class="mic" viewBox="0 0 12 18"><path d="M4 1.500h4v9H4zM1.500 8v5h9V8M6 13v4M3 17h6" fill="none" stroke="#aaa"/></svg>
        </div>
        <div class="apps">
            <button aria-label="任务视图"><svg viewBox="0 0 26 26"><path d="M7.500 6.500h11v13h-11zM5 8.500H3.500v9H5M21 8.500h1.500v9H21" fill="none" stroke="#fff" stroke-width="1.200"/></svg></button>
            <button aria-label="搜狗"><svg viewBox="0 0 26 26"><g fill="#e4e8ea"><ellipse cx="9" cy="8" rx="5.500" ry="4.500"/><ellipse cx="18" cy="9" rx="4.500" ry="5.500"/><ellipse cx="17" cy="18" rx="5.500" ry="4.500"/><ellipse cx="8" cy="17" rx="4.500" ry="5.500"/></g><path d="M4 9c5 0 9 1 9 4s4 4 9 4M17 4c-4 4-4 6-4 9s-1 6-4 9" fill="none" stroke="#10181b" stroke-width="1.200"/></svg></button>
            <button aria-label="浏览器"><svg viewBox="0 0 26 26"><path d="M19 5C10 2 4 7 5 14s9 9 13 5c3-3 1-8-3-8-3 0-4 3-3 5" fill="none" stroke="#cfd4d6" stroke-width="1.500"/><path d="M20 7C12 4 7 9 8 14s6 6 9 3c2-3 0-5-2-4" fill="none" stroke="#cfd4d6"/></svg></button>
            <button aria-label="Edge"><svg viewBox="0 0 26 26"><path d="M3 12C4 5 9 2 14 2c6 0 9 5 9 10v3H10c0 4 4 6 11 3v4c-7 4-17 2-17-6 0-4 2-7 5-8-4 0-5 2-6 4zm7-1h7c0-5-7-5-7 0z" fill="#0f78d8"/></svg></button>
            <button aria-label="应用商店"><svg viewBox="0 0 26 26"><path d="M2 8h22v16H2z" fill="#fff"/><path d="M9 8V4c0-3 8-3 8 0v4" fill="none" stroke="#fff" stroke-width="1.300"/><path d="M8 11h4.500v4.500H8z" fill="#f25022"/><path d="M13.500 11H18v4.500h-4.500z" fill="#7fba00"/><path d="M8 16.500h4.500V21H8z" fill="#00a4ef"/><path d="M13.500 16.500H18V21h-4.500z" fill="#ffb900"/></svg></button>
            <button aria-label="资源管理器"><svg viewBox="0 0 26 26"><path d="M2 3h8l2 3h12v16H2z" fill="#f7cf5c"/><path d="M3 8h20v13H3z" fill="#fde79a"/><path d="M6 23v-8h14v8h-4v-4h-6v4z" fill="#3aa6e4"/></svg></button>
            <button aria-label="IE"><svg viewBox="0 0 26 26"><path d="M4 14C4 8 8 5 13 5s9 4 9 10H9c0 5 6 5 8 2h5c-3 8-18 7-18-3zm5-2h8c0-4-8-4-8 0z" fill="#4fb4f0"/><path d="M3 23C-1 19 9 5 19 2c6-1 5 3 3 6M3 23c2 2 5 0 7-1" fill="none" stroke="#f2c12e" stroke-width="2"/></svg></button>
            <button class="run" aria-label="360浏览器"><svg viewBox="0 0 26 26"><circle cx="13" cy="13" r="10.500" fill="#5cbf2a"/><path d="M19 16c-2 5-12 4-12-3s12-8 12 0H9" fill="none" stroke="#fff" stroke-width="2.600"/><path d="M3 20C9 8 16 3 24 2" fill="none" stroke="#2d8a1c" stroke-width="1.200"/></svg></button>
            <button class="run" aria-label="编辑器"><svg viewBox="0 0 26 26"><path d="M1 2h24v22H1z" fill="#f09a1a"/><path d="M5 5h14v17H5z" fill="#fffbe8"/><path d="M7 9h7M7 12h6M7 15h4" stroke="#a85"/><path d="m10 19 10-14 4 2-11 13z" fill="#d7651d"/></svg></button>
            <button class="run focus" aria-label="GGJ2013"><svg viewBox="0 0 26 26"><use href="#app" x="1" y="1" width="24" height="24"/></svg></button>
            <button class="run" aria-label="广联达"><svg viewBox="0 0 26 26"><path d="M22 2C10-1 2 6 3 14s12 12 18 6c3-3 3-7 1-10l-7 2c3 2 3 6-1 6-6 0-6-9 1-11 3-1 7 1 7-5z" fill="#1b9af0"/></svg></button>
            <button class="run" aria-label="助手"><svg viewBox="0 0 26 26"><circle cx="13" cy="13" r="11.500" fill="#7fa08a"/><path d="M7 18c2-2 1-12 6-12s4 10 7 12M4 17c2 3 5 3 7 1" fill="none" stroke="#e6efe8"/><path d="m18 18 5 1-3 5z" fill="#e88a3c"/></svg></button>
        </div>
        <div class="cpu">34%<br>CPU使用</div>
        <div class="tray">
            <svg viewBox="0 0 16 16"><path d="m2 11 6-6 6 6"/></svg>
            <svg viewBox="0 0 16 16"><path d="M4.500 5.500h10v7h-10zM1 3.500h4M2 1v2m2-2v2M3 4v5h2"/><path d="M6 7h7v4H6z" fill="#fff"/></svg>
            <svg viewBox="0 0 16 16"><path d="M3 14C3 8 7 3 13 3M6 14c0-5 3-8 8-8M9 14c0-3 2-5 5-5M12 14c0-1 1-2 2-2"/></svg>
            <svg viewBox="0 0 16 16"><path d="M1 6h3l4-4v12l-4-4H1zM10 5.500c1 2 1 3 0 5M12 4c2 3 2 5 0 8M14 2c3 4 3 8 0 12"/></svg>
            <svg class="wide" viewBox="0 0 24 16"><path d="M1.500 2.500h21v11h-21zM6 11.500h12"/><path d="M4 5.500h16M4 8.500h16" stroke-dasharray="2 1"/></svg>
            <span>中</span>
            <svg viewBox="0 0 28 28"><use href="#sogou"/></svg>
        </div>
        <div class="clock">16:18<br>2017/11/16</div>
        <button class="notice" aria-label="通知"><svg viewBox="0 0 28 28"><path d="M3 4h18v13h-8l-4 4v-4H3z" fill="#fff"/><path d="M6 8h12M6 11h12M6 14h7" stroke="#111"/><circle cx="18" cy="18" r="7.500" fill="#333" stroke="#999"/><text x="15" y="22">2</text></svg></button>
    </footer>
</body>
</html>
```
FILE: styles.css
```css
* {
    box-sizing: border-box;
}

body {
    margin: 0;
    height: 100vh;
    display: flex;
    flex-direction: column;
    position: relative;
    overflow: hidden;
    background: #f0f0f0;
    color: #000;
    font-family: "Noto Sans CJK SC", sans-serif;
    font-size: 12px;
    line-height: 16px;
}

button, input, select {
    font: inherit;
    color: inherit;
    margin: 0;
    border-radius: 0;
}

button {
    border: none;
    background: none;
    padding: 0;
    white-space: nowrap;
}

ul {
    list-style: none;
    margin: 0;
    padding: 0;
}

.sprite {
    position: absolute;
    width: 0;
    height: 0;
}

.icon {
    width: 16px;
    height: 16px;
    flex: none;
}

.code {
    font-family: "DejaVu Sans Mono", monospace;
    font-size: 10px;
}

/* title bar */
.titlebar {
    height: 23px;
    flex: none;
    display: flex;
    align-items: center;
    padding-left: 2px;
    background: #fff;
    color: #8f8f8f;
}

.title {
    margin-left: 5px;
    white-space: nowrap;
    font-family: Inter, "Noto Sans CJK SC", sans-serif;
}

.win-buttons {
    margin-left: auto;
    display: flex;
    padding-right: 3px;
}

.win-buttons button {
    width: 45px;
    height: 20px;
}

.win-buttons svg {
    width: 12px;
    height: 12px;
    fill: none;
    stroke: #888;
}

/* menu and toolbars */
.menubar {
    height: 31px;
    flex: none;
    display: flex;
    align-items: center;
    gap: 11px;
    padding-left: 7px;
    font-family: "Open Sans", "Noto Sans CJK SC", sans-serif;
}

.tool {
    display: flex;
    align-items: center;
    gap: 4px;
}

.off {
    color: #808080;
}

.caret {
    width: 7px;
    margin-left: 1px;
    display: flex;
    justify-content: flex-end;
}

.caret::after {
    content: "";
    border: 3px solid transparent;
    border-top-color: currentColor;
    border-bottom: none;
}

.tight .caret {
    margin-left: -3px;
}

.sep {
    width: 1px;
    height: 16px;
    background: #b4b4b4;
    flex: none;
}

.more {
    margin-left: auto;
    align-self: flex-start;
    font-size: 16px;
    line-height: 12px;
}

.tip {
    flex: 1;
    align-self: stretch;
    padding-left: 26px;
    line-height: 30px;
    background: #f8f8f8;
    color: #0a7070;
    text-decoration: none;
    white-space: nowrap;
}

.account {
    width: 241px;
    height: 30px;
    flex: none;
    display: flex;
    align-items: center;
    gap: 9px;
    padding: 0 4px 0 5px;
    margin-left: -11px;
    border-left: 1px solid #fff;
    background: linear-gradient(#fafafa, #ededed);
}

.account .more {
    padding-top: 4px;
    font-size: 14px;
}

.toolbars {
    height: 30px;
    flex: none;
    display: flex;
}

.toolbar {
    display: flex;
    align-items: center;
    gap: 7px;
    height: 29px;
    background: linear-gradient(#fcfcfc, #eee);
}

.files {
    width: 153px;
    padding: 0 5px 0 4px;
    border-right: 1px solid #f0f0f0;
}

.actions {
    width: 550px;
    padding: 0 4px;
}

.views {
    flex: 1;
    padding: 0 4px 0 2px;
}

.views .sep {
    margin: 0 -1px;
}

.toolbar .more {
    padding-top: 2px;
}

.boxed {
    height: 24px;
    padding: 0 2px;
    margin-right: -3px;
    border: 1px solid #777;
}

.edit-bar {
    height: 28px;
    padding-left: 3px;
}

.edit-bar .sep:nth-of-type(-n+3) {
    margin: 0 -1px;
}

.floor {
    display: flex;
    align-items: center;
    gap: 7px;
    margin-left: -3px;
    margin-right: -3px;
}

select {
    appearance: none;
    border: none;
    background: #fff url("data:image/svg+xml,%3Csvg xmlns='http://www.w3.org/2000/svg' width='6' height='3'%3E%3Cpath d='M0 0h6L3 3z' fill='%23333'/%3E%3C/svg%3E") right 4px center no-repeat;
}

.floor select {
    width: 61px;
    height: 22px;
    padding: 0 1px;
}

.move {
    gap: 8px;
}

.arrow {
    width: 10px;
    height: 10px;
}

/* workspace */
.workspace {
    flex: 1;
    min-height: 0;
    display: flex;
}

.nav-panel {
    width: 167px;
    flex: none;
    display: flex;
    flex-direction: column;
    padding: 0 1px;
}

.nav-title {
    height: 15px;
    display: flex;
    align-items: center;
    justify-content: space-between;
    border: 1px solid #a0a0a0;
    font-size: 13px;
    margin-bottom: 2px;
}

.nav-title svg {
    width: 30px;
    height: 12px;
    margin-right: 2px;
    fill: none;
    stroke: #222;
}

.nav-button {
    height: 22px;
    flex: none;
    border: 1px solid #a0a0a0;
    border-top-color: #e3e3e3;
    background: #f0f0f0;
}

.nav-tools {
    height: 27px;
    flex: none;
    padding: 5px;
    border-left: 1px solid #a0a0a0;
    background: linear-gradient(#fff, #ececec);
}

.nav-tools svg {
    width: 40px;
    height: 18px;
}

.tree-box {
    flex: 1;
    min-height: 0;
    display: flex;
    flex-direction: column;
    margin: 0 1px 1px 2px;
    border: 1px solid #828790;
    background: #fff;
}

.tree-main {
    flex: 1;
    min-height: 0;
    display: flex;
}

.tree {
    flex: 1;
    overflow: hidden;
    padding-top: 1px;
    white-space: nowrap;
}

.branch {
    display: flex;
    align-items: center;
    gap: 5px;
    height: 16px;
}

.chev {
    width: 10px;
    height: 10px;
    flex: none;
}

.tree .branch {
    padding-left: 7px;
}

.branch .chev {
    margin-right: 1px;
}

.tree ul {
    margin-left: 12px;
    padding-left: 18px;
    border-left: 1px dotted #888;
}

.tree li li, .component-list li {
    display: flex;
    align-items: center;
    height: 16px;
    border-left: 1px dotted #888;
}

.tree li li::before, .component-list li::before {
    content: "";
    width: 9px;
    border-top: 1px dotted #888;
}

.leaf {
    display: flex;
    align-items: center;
    gap: 5px;
    height: 16px;
    padding-right: 5px;
}

.current {
    background: #d9d9d9;
}

.vscroll {
    width: 16px;
    flex: none;
    display: flex;
    flex-direction: column;
    align-items: center;
    justify-content: space-between;
    padding: 4px 0;
    background: #f0f0f0;
}

.vscroll i {
    width: 15px;
    background: #cdcdcd;
    height: 160px;
    margin-bottom: auto;
}

.vscroll .chev:first-child {
    transform: rotate(180deg);
    margin-bottom: 4px;
}

.nav-scroll i {
    height: 208px;
    margin-top: 65px;
}

.hscroll {
    height: 16px;
    flex: none;
    display: flex;
    align-items: center;
    padding: 0 22px 0 4px;
    background: #f0f0f0;
}

.hscroll i {
    flex: 1;
    height: 15px;
    margin: 0 9px 0 4px;
    background: #cdcdcd;
}

.hscroll .chev:first-child {
    transform: rotate(90deg);
}

.hscroll .chev:last-child {
    transform: rotate(270deg);
}

.content {
    flex: 1;
    min-width: 0;
    display: flex;
    flex-direction: column;
    padding-left: 1px;
}

.panes {
    flex: 1;
    min-height: 0;
    display: flex;
    gap: 4px;
}

.component-pane {
    width: 184px;
    flex: none;
    display: flex;
    flex-direction: column;
    padding-top: 4px;
    background: #f8f8f8;
}

.search {
    display: flex;
    gap: 2px;
    height: 26px;
    padding-left: 1px;
}

.search input {
    width: 157px;
    height: 25px;
    padding: 0 2px 3px;
    border: 1px solid #707070;
    background: #fff;
}

.search input::placeholder {
    color: #888;
}

.search button {
    width: 23px;
    height: 25px;
    padding-top: 4px;
    background: #fff;
}

.component-list {
    flex: 1;
    padding: 1px 0 0 7px;
    border: 1px solid #828790;
    border-right-width: 2px;
    background: #fff;
}

.component-list ul {
    margin-left: 24px;
}

.component-list .leaf {
    gap: 8px;
    padding-left: 2px;
    font-family: "DejaVu Sans Mono", monospace;
    font-size: 10px;
}

.component-list .branch {
    gap: 4px;
}

.component-list .branch .chev {
    margin-right: 2px;
}

.gear {
    width: 12px;
    height: 12px;
}

.picked {
    background: #316ac5;
}

.property-pane {
    flex: 1;
    display: flex;
    flex-direction: column;
    background: #fff;
}

.tab-strip {
    display: flex;
    height: 20px;
    border-bottom: 1px solid #d9d9d9;
}

.tab {
    height: 20px;
    padding: 0 8px 0 6px;
    border: 1px solid #d9d9d9;
    border-bottom: none;
    background: #fff;
}

.property-box {
    flex: 1;
    min-height: 0;
    overflow: hidden;
    margin: 4px 4px 3px 3px;
    padding: 1px;
    border: 1px solid #a8a8a8;
}

/* data grids */
.grid {
    table-layout: fixed;
    border-collapse: separate;
    border-spacing: 0;
}

.grid th, .grid td {
    padding: 0;
    border-right: 1px solid #c0c0c0;
    border-bottom: 1px solid #c0c0c0;
    white-space: nowrap;
    overflow: hidden;
    font-weight: normal;
    line-height: 16px;
}

.grid th {
    text-align: center;
    background: linear-gradient(#fff, #ededed);
}

.grid tbody th {
    font-family: "DejaVu Sans Mono", monospace;
    font-size: 10px;
    background: linear-gradient(90deg, #fbfbfb, #efefef);
}

.grid .hot {
    background: linear-gradient(#fbd79a, #f0be5c);
    color: #600050;
}

.grid .active th {
    background: #ffd08a;
    color: #600050;
}

.w-num {
    width: 21px;
}

.property {
    width: 369px;
}

.property thead th {
    height: 23px;
}

.property tbody tr {
    height: 19px;
}

.w-name {
    width: 191px;
}

.w-value {
    width: 126px;
}

.w-extra {
    width: 31px;
}

.property td:nth-child(2) {
    padding-left: 20px;
}

.property td:nth-child(3) {
    padding-left: 2px;
}

.property td:nth-child(4) {
    text-align: center;
}

.property .link {
    color: #00f;
}

.property .dim td {
    color: #808080;
}

.property .active td:nth-child(2) {
    background: #0078d7;
    color: #fff;
}

.property .active td:nth-child(3) {
    background: #d8eaf9;
}

.property input {
    appearance: none;
    display: block;
    width: 13px;
    height: 13px;
    margin: 0 auto;
    border: 1px solid #333;
    background: #fff;
}

.rebar {
    width: 10px;
    height: 10px;
    margin: 0 1px;
    color: #000;
    vertical-align: -1px;
}

/* status bar */
.statusbar {
    height: 23px;
    flex: none;
    display: flex;
    gap: 2px;
    padding-top: 3px;
    background: #fff;
}

.statusbar span {
    height: 20px;
    padding-left: 2px;
    border: 1px solid #dcdcdc;
    background: linear-gradient(#fff, #f2f2f2);
    line-height: 18px;
    white-space: nowrap;
}

.s-blank {
    width: 148px;
}

.s-height {
    width: 78px;
}

.s-base {
    width: 98px;
}

.s-count {
    width: 48px;
}

.s-hint {
    flex: 1;
}

.s-fps {
    width: 71px;
}

/* section editor window */
.editor {
    position: absolute;
    top: 127px;
    right: 5px;
    width: 610px;
    height: 566px;
    display: flex;
    flex-direction: column;
    padding: 0 7px 6px 6px;
    border: 1px solid #444;
    background: linear-gradient(#becedf, #d8e4f1 32px);
}

.editor h2 {
    height: 30px;
    flex: none;
    margin: 0;
    padding-top: 10px;
    font-size: 12px;
    font-weight: normal;
    color: #8a8f96;
}

.editor-body {
    flex: 1;
    min-height: 0;
    display: flex;
    flex-direction: column;
    background: #f0f0f0;
}

.editor-tabs {
    height: 21px;
    flex: none;
    display: flex;
    align-items: flex-end;
    padding-left: 2px;
}

.editor-tabs button {
    width: 39px;
    height: 19px;
    padding-right: 2px;
    border: 1px solid #d9d9d9;
    border-bottom: none;
    background: #f0f0f0;
}

.editor-tabs .on {
    width: 43px;
    height: 21px;
    padding: 0 4px 2px 0;
    background: #fff;
}

.editor-page {
    flex: 1;
    min-height: 0;
    display: flex;
    flex-direction: column;
    margin-right: 2px;
    padding: 2px 2px 2px 5px;
    border: 1px solid #d9d9d9;
    background: #fff;
}

.editor-bar {
    height: 28px;
    flex: none;
    display: flex;
    align-items: center;
    gap: 10px;
    padding-left: 3px;
    background: linear-gradient(#fcfcfc, #f0f0f0);
}

.editor-bar .sep {
    margin: 0 -2px;
}

.grip {
    height: 14px;
    margin-right: -3px;
    border-left: 2px dotted #aaa;
}

.info {
    gap: 1px;
    height: 27px;
    margin-bottom: 2px;
    color: #808080;
}

.info .grip {
    margin-right: 5px;
}

.info select {
    width: 133px;
    height: 23px;
    padding: 0 1px;
    border: 1px solid #777;
}

.drawing {
    flex: 1;
    min-height: 0;
    width: 100%;
    border: 2px solid #f00;
    background: #000;
}

.drawing path {
    fill: none;
}

.axes {
    stroke: #333;
    stroke-dasharray: 12 3 4 3;
}

.main-axis {
    stroke: #666;
}

.outline {
    stroke: #fff;
}

.dims {
    stroke: #0f0;
}

.stirrups {
    stroke: #f00;
    stroke-width: 3;
}

.thin {
    stroke-width: 2;
}

.bars {
    fill: #000;
}

.corner {
    stroke: #ff0;
}

.edge {
    stroke: #f0f;
}

.labels {
    fill: #fff;
    font-family: "DejaVu Sans Mono", "Noto Sans CJK SC", monospace;
    font-size: 8px;
}

.labels .note {
    font-size: 9px;
}

.labels .green {
    fill: #0f0;
}

.origin {
    fill: #3a4450;
    font-size: 10px;
}

.editor-status {
    height: 22px;
    flex: none;
    display: flex;
    gap: 2px;
    margin-top: 3px;
    border-top: 1px solid #fff;
}

.editor-status span {
    flex: 1;
    padding-left: 8px;
    border: 1px solid #dcdcdc;
    background: linear-gradient(#fff, #f2f2f2);
    line-height: 18px;
    font-family: "DejaVu Sans Mono", monospace;
    font-size: 10px;
}

.editor-status span:first-child {
    flex: 0 0 150px;
}

.editor-status svg {
    display: block;
    width: 12px;
    height: 12px;
    margin: 6px 0 0 auto;
}

/* stirrup dialog */
.dialog {
    position: absolute;
    top: 336px;
    left: 241px;
    width: 456px;
    height: 349px;
    display: flex;
    flex-direction: column;
    border: 1px solid #3c8fdd;
    background: #f0f0f0;
    box-shadow: 2px 4px 14px rgba(0, 0, 0, 0.4);
}

.dialog-title {
    height: 25px;
    flex: none;
    display: flex;
    align-items: center;
    justify-content: space-between;
    padding: 0 9px 2px 3px;
    background: #fff;
}

.dialog-title svg {
    width: 12px;
    height: 12px;
    display: block;
    fill: none;
    stroke: #000;
}

.dialog-grid {
    flex: 1;
    min-height: 0;
    padding: 1px;
    border: 1px solid #a0a0a0;
    background: #fff;
}

.dialog-view {
    height: 100%;
    display: flex;
    justify-content: space-between;
    overflow: hidden;
}

.stirrup {
    width: 404px;
    height: 0;
}

.w-no {
    width: 61px;
}

.w-info {
    width: 121px;
}

.w-shape {
    width: 201px;
}

.stirrup thead th {
    height: 19px;
    line-height: 18px;
}

.stirrup td {
    height: 34px;
    font-family: "DejaVu Sans Mono", monospace;
    font-size: 10px;
}

.stirrup .last td {
    height: 27px;
}

.stirrup td:nth-child(2) {
    text-align: center;
}

.stirrup td:nth-child(3) {
    padding-left: 3px;
}

.stirrup .active td:nth-child(2) {
    background: #d8eaf9;
}

.shape {
    display: flex;
    align-items: center;
    gap: 9px;
    padding-left: 54px;
}

.shape svg {
    width: 36px;
    height: 24px;
}

.shape text {
    fill: #f00;
}

.cup {
    display: block;
    width: 134px;
    height: 20px;
    margin-left: 36px;
}

.cup path {
    fill: none;
    stroke: #000;
    stroke-width: 2;
}

.dialog-buttons {
    height: 42px;
    flex: none;
    display: flex;
    align-items: center;
    gap: 7px;
    padding: 0 13px 0 5px;
}

.dialog-buttons button {
    width: 73px;
    height: 23px;
    border: 1px solid #adadad;
    background: #e1e1e1;
}

.dialog-buttons .ok {
    margin-left: auto;
    border: 2px solid #0078d7;
}

/* floating widgets */
.ball {
    position: absolute;
    top: -33px;
    left: 490px;
    width: 50px;
    height: 50px;
    padding-top: 31px;
    border: 1px solid #eee;
    border-radius: 50%;
    background: linear-gradient(#35b44a, #35b44a 60%, #5bd570);
    box-shadow: 0 1px 8px rgba(0, 0, 0, 0.5);
    color: #fff;
    text-align: center;
}

.ime {
    position: absolute;
    top: 3px;
    right: 314px;
    width: 184px;
    height: 23px;
    border: 1px solid #a8bdd4;
    background: #fff;
}

.ime svg {
    display: block;
    width: 184px;
    height: 28px;
    margin: -4px 0 0 -1px;
    overflow: visible;
}

.ime text {
    font-size: 15px;
    font-weight: bold;
    fill: #1c6fc8;
}

/* taskbar */
.taskbar {
    height: 40px;
    flex: none;
    display: flex;
    align-items: center;
    background: #020b0e;
    color: #fff;
}

.start {
    width: 48px;
    height: 40px;
    background: #000;
}

.start svg {
    width: 16px;
    height: 16px;
    display: block;
    margin: 0 auto;
}

.cortana {
    width: 344px;
    height: 40px;
    display: flex;
    align-items: center;
    gap: 5px;
    padding: 0 14px 0 9px;
    background: #333;
}

.cortana svg {
    width: 22px;
    height: 22px;
    flex: none;
}

.cortana .mic {
    width: 12px;
    height: 18px;
}

.cortana input {
    flex: 1;
    min-width: 0;
    padding: 0;
    border: none;
    background: none;
    font-size: 14px;
}

.cortana input::placeholder {
    color: #9a9a9a;
}

.apps {
    width: 580px;
    height: 40px;
    display: flex;
}

.apps button {
    flex: 1;
    padding-top: 2px;
    border-bottom: 3px solid transparent;
}

.apps svg {
    width: 26px;
    height: 26px;
    display: block;
    margin: 0 auto;
}

.apps .run {
    margin: 0 5px;
    border-bottom-color: #82b9f0;
}

.apps .focus {
    margin: 0 1px;
    background: #333d42;
}

.cpu, .clock {
    text-align: center;
    line-height: 18px;
    white-space: nowrap;
}

.cpu {
    width: 90px;
}

.tray {
    flex: 1;
    display: flex;
    align-items: center;
    justify-content: space-between;
    padding: 0 14px 0 0;
}

.tray svg {
    width: 16px;
    height: 16px;
    fill: none;
    stroke: #fff;
}

.tray svg:last-child {
    stroke: none;
}

.tray .wide {
    width: 24px;
}

.clock {
    width: 66px;
}

.notice {
    width: 56px;
    margin-left: 4px;
}

.notice svg {
    width: 28px;
    height: 28px;
    display: block;
    margin: 0 auto;
}

.notice text {
    fill: #fff;
    font-size: 11px;
}
```
